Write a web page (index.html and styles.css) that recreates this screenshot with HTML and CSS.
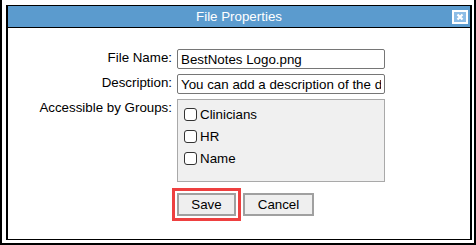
FILE: index.html
```html
<!DOCTYPE html>
<html lang="en">
<head>
    <meta charset="UTF-8">
    <meta name="viewport" content="width=device-width, initial-scale=1.0">
    <title>File Properties</title>
    <link rel="stylesheet" href="styles.css">
</head>
<body>
    <div class="frame">
        <div class="dialog">
            <div class="dialog-header">
                <span></span>
                <span class="dialog-title">File Properties</span>
                <button class="close-btn" title="Close">
                    <svg width="16" height="14" viewBox="0 0 16 14">
                        <rect x="1" y="1" width="14" height="12" fill="#8dbde6" stroke="#fff" stroke-width="2"/>
                        <path d="M5.5 4.5 L10.5 9.5 M10.5 4.5 L5.5 9.5" stroke="#fff" stroke-width="2.2"/>
                    </svg>
                </button>
            </div>

            <form class="props-form" onsubmit="return false;">
                <label class="field-label" for="fileName">File Name:</label>
                <input class="text-input" type="text" id="fileName" value="BestNotes Logo.png">

                <label class="field-label" for="description">Description:</label>
                <input class="text-input" type="text" id="description" value="You can add a description of the document here">

                <span class="field-label">Accessible by Groups:</span>
                <div class="group-box">
                    <label class="group-row"><input type="checkbox"> Clinicians</label>
                    <label class="group-row"><input type="checkbox"> HR</label>
                    <label class="group-row"><input type="checkbox"> Name</label>
                </div>

                <span></span>
                <div class="actions">
                    <button class="button save-btn">Save</button>
                    <button class="button">Cancel</button>
                </div>
            </form>
        </div>
    </div>
</body>
</html>
```

FILE: styles.css
```css
* {
    box-sizing: border-box;
}
html, body {
    margin: 0;
    background-color: #fff;
}
body {
    font-family: "Liberation Sans", Arial, sans-serif;
    font-size: 13.33px;
    color: #000;
}
.frame {
    width: 476px;
    height: 245px;
    border: 2px solid #000;
    border-top: none;
    padding: 5px 2px 3px 4px;
}
.dialog {
    height: 100%;
    border: 2px solid #000;
    border-top-width: 1px;
    border-bottom-width: 1px;
    background-color: #fff;
}
.dialog-header {
    display: grid;
    grid-template-columns: 1fr auto 1fr;
    align-items: center;
    height: 22px;
    background-color: #5b9bce;
    border-bottom: 1px solid #000;
    color: #fff;
}
.dialog-title {
    font-size: 13.33px;
    line-height: 16px;
}
.close-btn {
    justify-self: end;
    margin-right: 2px;
    padding: 0;
    border: none;
    background: none;
    width: 16px;
    height: 14px;
    display: flex;
}
.props-form {
    display: grid;
    grid-template-columns: 164px 208px;
    column-gap: 5px;
    row-gap: 5px;
    padding-top: 21px;
}
.field-label {
    text-align: right;
    line-height: 16px;
    padding-top: 1px;
}
.text-input {
    height: 20px;
    width: 208px;
    margin: 0;
    padding: 0 3px;
    border: 1px solid #767676;
    border-radius: 2px;
    font-family: inherit;
    font-size: 13.33px;
    color: #000;
}
.group-box {
    height: 83px;
    background-color: #f0f0f0;
    border: 1px solid #a9a9a9;
    padding: 3px 0 0 6px;
}
.group-row {
    display: flex;
    align-items: center;
    height: 22px;
}
.group-row input {
    appearance: none;
    width: 13px;
    height: 13px;
    margin: 0 3px 0 0;
    border: 1px solid #333;
    border-radius: 3px;
    background-color: #fff;
}
.actions {
    display: flex;
    gap: 7px;
    margin-top: 6px;
}
.button {
    height: 23px;
    padding: 0;
    background-color: #efefef;
    border: 2px solid #a0a0a0;
    font-family: inherit;
    font-size: 13.33px;
    color: #000;
    width: 71px;
}
.save-btn {
    width: 59px;
    outline: 3px solid #ee4040; /* highlight box round Save */
    outline-offset: 2px;
}
```
